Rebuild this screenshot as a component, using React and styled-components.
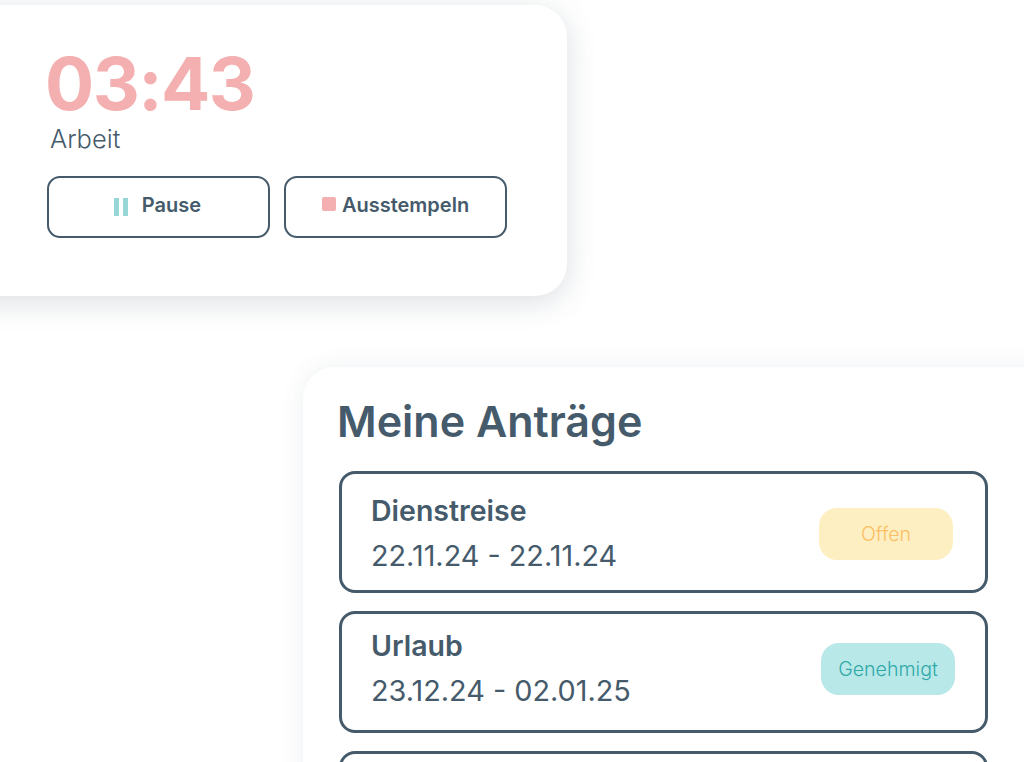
import React from 'react';
import styled, { createGlobalStyle } from 'styled-components';

const GlobalStyle = createGlobalStyle`
  html, body {
    margin: 0;
    padding: 0;
    background: #fff;
  }
  body {
    font-family: "Inter", "Liberation Sans", sans-serif;
    color: #455b6b;
  }
`;

const Page = styled.div`
  width: 1024px;
  height: 762px;
  overflow: hidden;
  padding-top: 5px;
  box-sizing: border-box;
`;

const TimerCard = styled.section`
  box-sizing: border-box;
  width: 607px;
  height: 291px;
  margin-left: -40px;
  padding: 49px 0 0 87px;
  background: #fff;
  border-radius: 0 32px 32px 0;
  box-shadow: 0 6px 30px rgba(70, 89, 106, 0.2);
`;

const Time = styled.div`
  margin-left: -2px;
  font-size: 73px;
  line-height: 60px;
  font-weight: 700;
  letter-spacing: -1.6px;
  color: #f4afb0;
`;

const Label = styled.div`
  margin: 9px 0 0 3px;
  font-size: 25.5px;
  line-height: 32px;
  font-weight: 300;
  color: #455b6b;
`;

const Actions = styled.div`
  display: flex;
  gap: 14px;
  margin-top: 21px;
`;

const ActionButton = styled.button`
  box-sizing: border-box;
  display: flex;
  align-items: center;
  justify-content: center;
  gap: ${({ $gap }) => $gap}px;
  width: 223px;
  height: 62px;
  padding: 0 ${({ $nudge }) => $nudge}px 4px 0;
  background: #fff;
  border: 2.5px solid #455b6b;
  border-radius: 13px;
  font-family: inherit;
  font-size: 20px;
  font-weight: 600;
  color: #455b6b;
`;

const PauseIcon = styled.span`
  display: block;
  width: 14px;
  height: 18px;
  margin-top: 4px;
  background: linear-gradient(to right, #97d6d6 5px, transparent 5px, transparent 9px, #97d6d6 9px);
`;

const StopIcon = styled.span`
  display: block;
  width: 14px;
  height: 14px;
  margin-top: -2px;
  border-radius: 2px;
  background: #f4afb0;
`;

const RequestsCard = styled.section`
  box-sizing: border-box;
  width: 760px;
  height: 420px;
  margin: 71px 0 0 303px;
  padding: 27px 0 0 34px;
  background: #fff;
  border-radius: 32px 0 0 0;
  box-shadow: 0 0 24px rgba(70, 89, 106, 0.09);
`;

const Title = styled.h2`
  margin: 0;
  font-size: 43px;
  line-height: 54px;
  font-weight: 600;
  color: #455b6b;
`;

const RequestList = styled.div`
  display: flex;
  flex-direction: column;
  gap: 18px;
  margin: 23px 0 0 2px;
`;

const Row = styled.div`
  box-sizing: border-box;
  display: flex;
  align-items: center;
  justify-content: space-between;
  width: 649px;
  height: 122px;
  padding: ${({ $top }) => $top}px ${({ $right }) => $right}px ${({ $bottom }) => $bottom}px 29px;
  border: 3px solid #455b6b;
  border-radius: 16px;
`;

const RowText = styled.div`
  display: flex;
  flex-direction: column;
  gap: 9px;
`;

const RowTitle = styled.div`
  font-size: 28.5px;
  line-height: 36px;
  font-weight: 600;
`;

const RowDates = styled.div`
  font-size: 28.8px;
  line-height: 36px;
  font-weight: 400;
`;

const Badge = styled.div`
  box-sizing: border-box;
  width: 134px;
  height: 52px;
  display: flex;
  align-items: center;
  justify-content: center;
  border-radius: 18px;
  font-size: 19.6px;
  font-weight: 300;
  background: ${({ $bg }) => $bg};
  color: ${({ $fg }) => $fg};
`;

const requests = [
  { title: 'Dienstreise', dates: '22.11.24 - 22.11.24', status: 'Offen', bg: '#feefc3', fg: '#fbbe62', top: 3, bottom: 0, right: 32 },
  { title: 'Urlaub', dates: '23.12.24 - 02.01.25', status: 'Genehmigt', bg: '#b9e8e9', fg: '#2fa9a8', top: 0, bottom: 7, right: 30 },
  { title: '', dates: '', status: '', top: 0, bottom: 0, right: 30 },
];

export default function App() {
  return (
    <Page>
      <GlobalStyle />
      <TimerCard>
        <Time>03:43</Time>
        <Label>Arbeit</Label>
        <Actions>
          <ActionButton $gap={14} $nudge={2}>
            <PauseIcon />
            Pause
          </ActionButton>
          <ActionButton $gap={6} $nudge={0}>
            <StopIcon />
            Ausstempeln
          </ActionButton>
        </Actions>
      </TimerCard>
      <RequestsCard>
        <Title>Meine Anträge</Title>
        <RequestList>
          {requests.map((r, i) => (
            <Row key={i} $top={r.top} $bottom={r.bottom} $right={r.right}>
              <RowText>
                <RowTitle>{r.title}</RowTitle>
                <RowDates>{r.dates}</RowDates>
              </RowText>
              {r.status && <Badge $bg={r.bg} $fg={r.fg}>{r.status}</Badge>}
            </Row>
          ))}
        </RequestList>
      </RequestsCard>
    </Page>
  );
}
